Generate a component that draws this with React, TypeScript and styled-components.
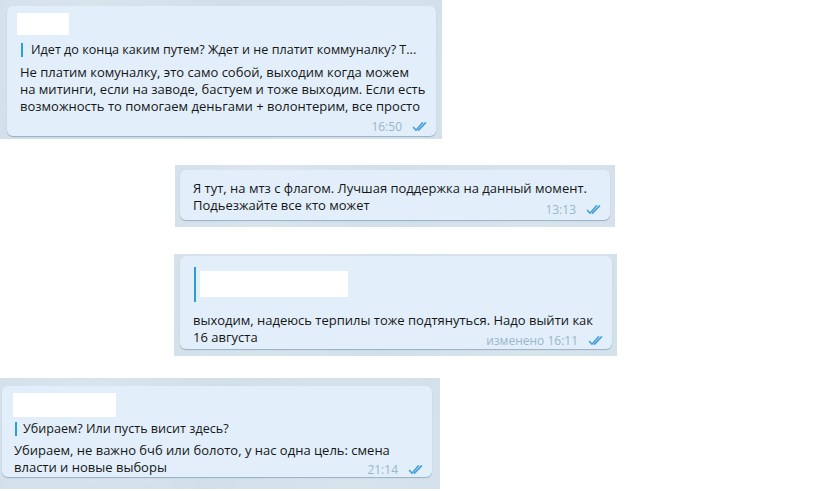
import React from "react";
import styled, { createGlobalStyle } from "styled-components";

const Global = createGlobalStyle`
  html, body { margin: 0; padding: 0; background: #ffffff; }
  body { font-family: "Open Sans", "Noto Sans", sans-serif; }
`;

const Canvas = styled.div`
  width: 837px;
  height: 491px;
  display: flex;
  flex-direction: column;
  align-items: flex-start;
  overflow: hidden;
`;

const Panel = styled.div<{ $ml: number; $mt: number; $w: number; $pad: string }>`
  margin-left: ${(p) => p.$ml}px;
  margin-top: ${(p) => p.$mt}px;
  width: ${(p) => p.$w}px;
  padding: ${(p) => p.$pad};
  box-sizing: border-box;
  background-color: #d1dfe9;
  background-image: radial-gradient(circle at 20% 30%, rgba(255,255,255,0.22), transparent 40%),
    radial-gradient(circle at 80% 70%, rgba(255,255,255,0.18), transparent 45%);
  display: flex;
`;

const Bubble = styled.div<{ $pad: string }>`
  position: relative;
  flex: 1;
  background: #e2effa;
  border-radius: 6px;
  box-shadow: 0 1px 1px rgba(105, 145, 178, 0.6);
  padding: ${(p) => p.$pad};
  color: #161616;
  font-size: 13px;
  display: flex;
  flex-direction: column;
  align-items: flex-start;
`;

const Redact = styled.div<{ $w: number; $h: number; $ml?: number; $mt?: number }>`
  width: ${(p) => p.$w}px;
  height: ${(p) => p.$h}px;
  margin-left: ${(p) => p.$ml ?? 0}px;
  margin-top: ${(p) => p.$mt ?? 0}px;
  background: #ffffff;
`;

const Quote = styled.div<{ $mt: number; $ml?: number; $h: number; $gap: number }>`
  display: flex;
  align-items: stretch;
  gap: ${(p) => p.$gap}px;
  margin-top: ${(p) => p.$mt}px;
  margin-left: ${(p) => p.$ml ?? 0}px;
  min-height: ${(p) => p.$h}px;
`;

const QuoteBar = styled.div`
  width: 2px;
  background: #2c9fd2;
  flex: none;
`;

const QuoteText = styled.div`
  font-size: 12.6px;
  line-height: 14px;
  white-space: nowrap;
  color: #161616;
`;

const Body = styled.div<{ $mt?: number }>`
  margin-top: ${(p) => p.$mt ?? 0}px;
  display: flex;
  flex-direction: column;
  align-items: flex-start;
`;

const Line = styled.span`
  display: block;
  line-height: 17px;
  white-space: nowrap;
`;

const Meta = styled.div<{ $overlay?: boolean; $bottom?: number; $mt?: number }>`
  display: flex;
  align-items: center;
  gap: 10px;
  height: 14px;
  color: #99b6ca;
  font-size: 12px;
  ${(p) =>
    p.$overlay
      ? `position: absolute; right: 6px; bottom: ${p.$bottom ?? 4}px;`
      : `align-self: flex-end; margin-top: ${p.$mt ?? 0}px; margin-right: -4px;`}
`;

const Checks = () => (
  <svg width="18" height="11" viewBox="0 0 18 11" fill="none" stroke="#4aa2d7" strokeWidth="1.7" strokeLinecap="round" strokeLinejoin="round">
    <path d="M1.5 6.5 L4 9.2 L10.5 1.8" />
    <path d="M6.5 9.2 L13.5 1.8" />
  </svg>
);

const Text = ({ lines, mt }: { lines: string[]; mt?: number }) => (
  <Body $mt={mt}>
    {lines.map((l, i) => (
      <Line key={i}>{l}</Line>
    ))}
  </Body>
);

export default function App() {
  return (
    <>
      <Global />
      <Canvas>
        <Panel $ml={0} $mt={0} $w={442} $pad="6px 6px 3px 7px">
          <Bubble $pad="7px 10px 3px 13px">
            <Redact $w={52} $h={22} $ml={-3} />
            <Quote $mt={8} $ml={1} $h={14} $gap={8}>
              <QuoteBar />
              <QuoteText>Идет до конца каким путем? Ждет и не платит коммуналку? Т...</QuoteText>
            </Quote>
            <Text
              mt={7}
              lines={[
                "Не платим комуналку, это само собой, выходим когда можем",
                "на митинги, если на заводе, бастуем и тоже выходим. Если есть",
                "возможность то помогаем деньгами + волонтерим, все просто",
              ]}
            />
            <Meta $mt={4}>
              <span>16:50</span>
              <Checks />
            </Meta>
          </Bubble>
        </Panel>

        <Panel $ml={175} $mt={26} $w={440} $pad="5px 5px 7px 5px">
          <Bubble $pad="10px 10px 6px 13px">
            <Text
              lines={[
                "Я тут, на мтз с флагом. Лучшая поддержка на данный момент.",
                "Подьезжайте все кто может",
              ]}
            />
            <Meta $overlay $bottom={4}>
              <span>13:13</span>
              <Checks />
            </Meta>
          </Bubble>
        </Panel>

        <Panel $ml={174} $mt={27} $w={443} $pad="2px 5px 7px 6px">
          <Bubble $pad="11px 10px 3px 13px">
            <Quote $mt={0} $ml={1} $h={35} $gap={4}>
              <QuoteBar />
              <Redact $w={148} $h={26} $mt={4} />
            </Quote>
            <Text
              mt={10}
              lines={["выходим, надеюсь терпилы тоже подтянуться. Надо выйти как", "16 августа"]}
            />
            <Meta $overlay $bottom={2}>
              <span>изменено 16:11</span>
              <Checks />
            </Meta>
          </Bubble>
        </Panel>

        <Panel $ml={0} $mt={22} $w={440} $pad="8px 8px 12px 2px">
          <Bubble $pad="7px 10px 1px 12px">
            <Redact $w={103} $h={24} $ml={-1} />
            <Quote $mt={5} $ml={1} $h={13} $gap={6}>
              <QuoteBar />
              <QuoteText>Убираем? Или пусть висит здесь?</QuoteText>
            </Quote>
            <Text
              mt={6}
              lines={["Убираем, не важно бчб или болото, у нас одна цель: смена", "власти и новые выборы"]}
            />
            <Meta $overlay $bottom={1}>
              <span>21:14</span>
              <Checks />
            </Meta>
          </Bubble>
        </Panel>
      </Canvas>
    </>
  );
}
